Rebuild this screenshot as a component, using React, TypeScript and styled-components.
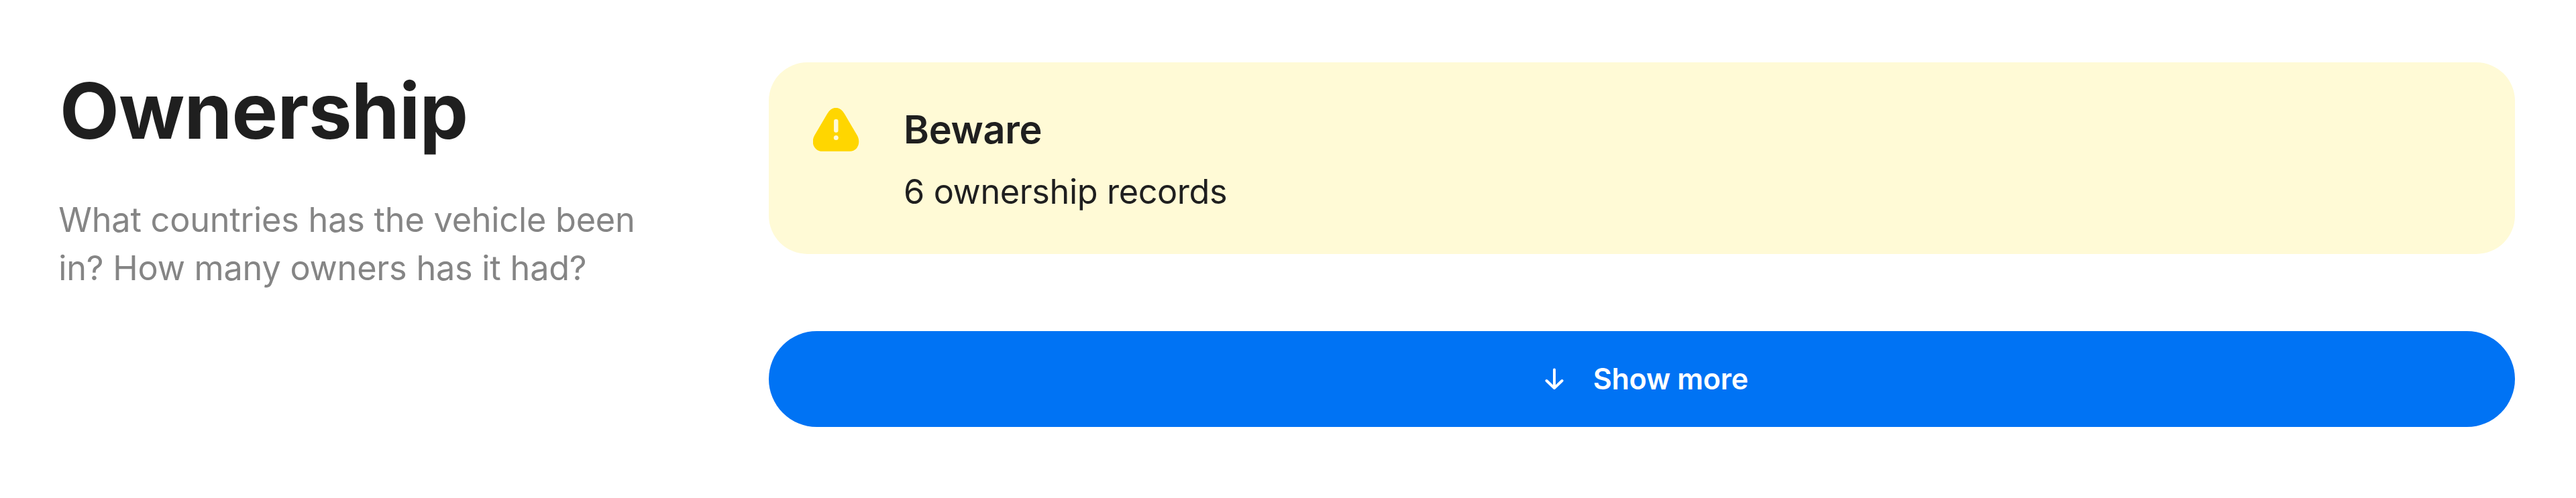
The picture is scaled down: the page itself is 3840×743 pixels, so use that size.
import React from "react";
import styled, { createGlobalStyle } from "styled-components";

const Global = createGlobalStyle`
  body { margin: 0; background: #fff; font-family: Inter, sans-serif; color: #1f1f1f; }
`;
const Section = styled.section`
  display: flex; box-sizing: border-box; width: 3840px; height: 743px;
  padding: 93.4px 90.8px 0 88px; justify-content: space-between; align-items: flex-start;
`;
const Intro = styled.header`
  width: 920px;
`;
const Title = styled.h2`
  margin: 0 0 0 1px; font-size: 115.2px; line-height: 144px; font-weight: 700; letter-spacing: -0.6px;
`;
const Description = styled.p`
  margin: 55px 0 0 -0.7px; font-size: 50.4px; line-height: 72px; letter-spacing: -0.22px; color: #858585;
`;
const Content = styled.div`
  width: 2603.2px; display: flex; flex-direction: column; gap: 114.4px;
`;
const Notice = styled.div`
  box-sizing: border-box; height: 285.8px; border-radius: 57.6px; background: #fffad6;
  padding: 64px 65.5px; display: flex; gap: 65.5px;
`;
const WarningIcon = styled.svg`
  display: block; width: 70px; height: 70px; margin-top: 4px;
`;
const NoticeTitle = styled.h3`
  margin: 0; font-size: 57.6px; line-height: 72px; font-weight: 600; letter-spacing: -0.3px;
`;
const NoticeText = styled.p`
  margin: 20.6px 0 0; font-size: 50.4px; line-height: 72px; letter-spacing: -0.4px;
`;
const MoreButton = styled.button`
  border: 0; height: 143.2px; padding: 0 0 0 14px; border-radius: 72px; background: #0073f4; color: #fff;
  font: 600 43.2px/58px Inter, sans-serif; letter-spacing: -0.35px;
  display: flex; align-items: center; justify-content: center; gap: 43.4px;
`;

export default function App() {
  return (
    <Section>
      <Global />
      <Intro>
        <Title>Ownership</Title>
        <Description>What countries has the vehicle been<br />in? How many owners has it had?</Description>
      </Intro>
      <Content>
        <Notice>
          <WarningIcon viewBox="0 0 70 70">
            <path d="M21 9C28-3.3 40-3.3 47 9L65.8 41C72 52 66 64.8 55 64.8H14C2 64.8-4 52 2.2 41Z" fill="#ffd600" />
            <path d="M34.3 20V33.5" stroke="#fffad6" strokeWidth="6.5" strokeLinecap="round" />
            <circle cx="34.3" cy="44.5" r="3.5" fill="#fffad6" />
          </WarningIcon>
          <div>
            <NoticeTitle>Beware</NoticeTitle>
            <NoticeText>6 ownership records</NoticeText>
          </div>
        </Notice>
        <MoreButton>
          <svg width="28" height="34" viewBox="0 0 28 34" fill="none" stroke="#fff" strokeWidth="4" strokeLinecap="round" strokeLinejoin="round">
            <path d="M14 3.5V31M2.5 20L14 31L25.5 20" />
          </svg>
          Show more
        </MoreButton>
      </Content>
    </Section>
  );
}
